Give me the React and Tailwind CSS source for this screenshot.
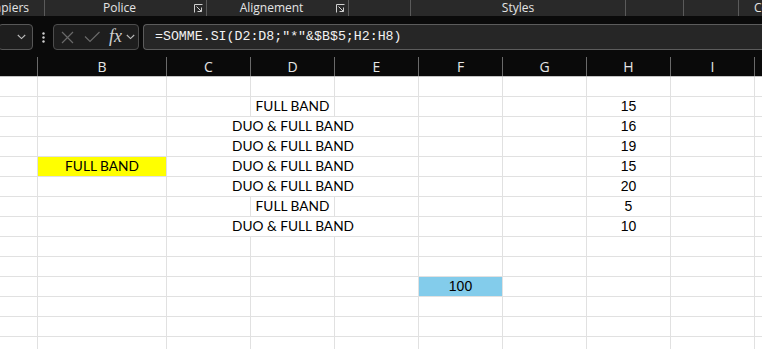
import React from "react";

const colWidths = ["w-[38px]", "w-[129px]", "w-[84px]", "w-[84px]", "w-[84px]", "w-[84px]", "w-[84px]", "w-[84px]", "w-[84px]"];
const letters = ["", "B", "C", "D", "E", "F", "G", "H", "I"];

// données visibles de la feuille (ligne 1 = première ligne visible)
const rows = [
  {},
  { d: "FULL BAND", h: "15" },
  { d: "DUO & FULL BAND", h: "16" },
  { d: "DUO & FULL BAND", h: "19" },
  { b: "FULL BAND", d: "DUO & FULL BAND", h: "15" },
  { d: "DUO & FULL BAND", h: "20" },
  { d: "FULL BAND", h: "5" },
  { d: "DUO & FULL BAND", h: "10" },
  {},
  {},
  { f: "100" },
  {},
  {},
  {},
];

function Launcher() {
  return (
    <svg width="9" height="9" viewBox="0 0 9 9" fill="none" stroke="#cfcfcf" strokeWidth="1">
      <path d="M0.5 8.5V0.5H8.5" />
      <path d="M2.5 2.5L7.5 7.5M7.5 3.5V7.5H3.5" />
    </svg>
  );
}

function Chevron({ color = "#bdbdbd" }) {
  return (
    <svg width="9" height="6" viewBox="0 0 9 6" fill="none" stroke={color} strokeWidth="1.1">
      <path d="M0.8 1L4.5 4.6L8.2 1" />
    </svg>
  );
}

function Cell({ width, right = true, bg = "", children, mono }) {
  return (
    <div
      className={`${width} h-[20px] shrink-0 flex items-center justify-center whitespace-nowrap border-b border-[#e1e1e1] ${
        right ? "border-r" : ""
      } ${bg} ${
        mono ? "font-['Liberation_Sans',sans-serif] text-[14px]" : "font-['Lato',sans-serif] text-[13.7px]"
      } text-black`}
    >
      {children}
    </div>
  );
}

export default function App() {
  return (
    <div className="w-[762px] h-[349px] overflow-hidden bg-white">
      {/* libellés des groupes du ruban */}
      <div className="h-[16px] bg-[#292929] flex text-[12px] text-[#e4e4e4] font-['Open_Sans',sans-serif] leading-none">
        <div className="w-[45px] shrink-0 flex items-center justify-end overflow-hidden border-r border-[#5a5a5a] pr-[3px]">
          <span className="whitespace-nowrap">Presse-papiers</span>
          <span className="w-[12px] shrink-0" />
          <Launcher />
        </div>
        <div className="w-[162px] shrink-0 flex items-center border-r border-[#5a5a5a] pr-[3px]">
          <span className="flex-1 text-center">Police</span>
          <Launcher />
        </div>
        <div className="w-[142px] shrink-0 flex items-center border-r border-[#5a5a5a] pr-[3px]">
          <span className="flex-1 text-center">Alignement</span>
          <Launcher />
        </div>
        <div className="w-[62px] shrink-0 border-r border-[#5a5a5a]" />
        <div className="w-[215px] shrink-0 flex items-center justify-center border-r border-[#5a5a5a]">Styles</div>
        <div className="w-[58px] shrink-0 border-r border-[#5a5a5a]" />
        <div className="w-[55px] shrink-0 border-r border-[#5a5a5a]" />
        <div className="flex-1 flex items-center pl-[15px] overflow-hidden whitespace-nowrap">Cellules</div>
      </div>

      {/* barre de formule */}
      <div className="h-[40px] bg-[#0a0a0a] flex items-start pt-[8px]">
        <div className="w-[35px] h-[26px] -ml-[2px] shrink-0 rounded-[4px] border border-[#575757] bg-[#1e1e1e] flex items-center justify-end pr-[6px]">
          <Chevron />
        </div>
        <div className="w-[20px] h-[26px] shrink-0 flex items-center justify-center">
          <svg width="3" height="11" viewBox="0 0 3 11" fill="#d0d0d0">
            <circle cx="1.5" cy="1.5" r="1.2" />
            <circle cx="1.5" cy="5.5" r="1.2" />
            <circle cx="1.5" cy="9.5" r="1.2" />
          </svg>
        </div>
        <div className="w-[86px] h-[26px] shrink-0 rounded-[4px] border border-[#4d4d4d] bg-[#1e1e1e] flex items-center pl-[7px] gap-[10px]">
          <svg width="13" height="13" viewBox="0 0 13 13" stroke="#696969" strokeWidth="1.2">
            <path d="M1 1L12 12M12 1L1 12" />
          </svg>
          <svg width="16" height="12" viewBox="0 0 16 12" fill="none" stroke="#696969" strokeWidth="1.2">
            <path d="M1 5.5L6 10.5L15.5 1" />
          </svg>
          <div className="flex items-center gap-[4px] ml-[-1px]">
            <span className="font-['Liberation_Serif',serif] italic text-[18px] text-[#d0d0d0] leading-none -mt-[2px]">fx</span>
            <Chevron />
          </div>
        </div>
        <div className="flex-1 h-[26px] ml-[4px] rounded-l-[4px] border border-r-0 border-[#5c5c5c] bg-[#262626] flex items-center pl-[11px] font-['Liberation_Mono',monospace] text-[13.25px] text-[#f2f2f2] whitespace-nowrap">
          =SOMME.SI(D2:D8;"*"&$B$5;H2:H8)
        </div>
      </div>

      {/* en-têtes de colonnes */}
      <div className="h-[21px] bg-[#0a0a0a] flex border-b border-[#c4c4c4]">
        {letters.map((l, i) => (
          <div
            key={i}
            className={`${colWidths[i]} shrink-0 flex items-center justify-center text-[14px] text-[#e6e6e6] font-['Open_Sans',sans-serif] mt-[1px] border-r border-[#6a6a6a]`}
          >
            {l}
          </div>
        ))}
        <div className="flex-1" />
      </div>

      {/* grille */}
      <div className="flex flex-col">
        {rows.map((r, idx) => {
          const wide = r.d === "DUO & FULL BAND";
          return (
            <div key={idx} className="flex">
              <Cell width={colWidths[0]} />
              <Cell width={colWidths[1]} bg={r.b ? "bg-[#ffff00]" : ""}>
                {r.b}
              </Cell>
              <Cell width={colWidths[2]} right={!wide} />
              <Cell width={colWidths[3]} right={!wide}>
                {r.d}
              </Cell>
              <Cell width={colWidths[4]} />
              <Cell width={colWidths[5]} bg={r.f ? "bg-[#83cceb]" : ""} mono>
                {r.f}
              </Cell>
              <Cell width={colWidths[6]} />
              <Cell width={colWidths[7]} mono>
                {r.h}
              </Cell>
              <Cell width={colWidths[8]} />
              <div className="flex-1 h-[20px] border-b border-[#e1e1e1]" />
            </div>
          );
        })}
      </div>
    </div>
  );
}
